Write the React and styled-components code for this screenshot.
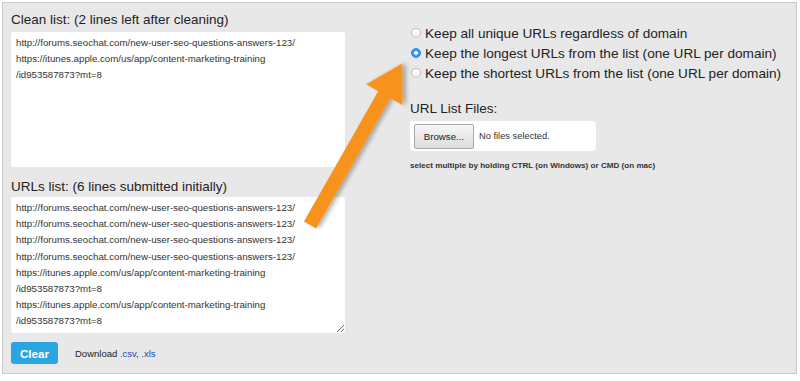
import React from 'react';
import styled, { createGlobalStyle } from 'styled-components';

const Global = createGlobalStyle`
  body {
    margin: 0;
    background: #fff;
    font-family: "Liberation Sans", Arial, Helvetica, sans-serif;
    color: #222;
  }
`

const Page = styled.div`
  position: relative;
  width: 800px;
  height: 381px;
  padding: 2px;
  box-sizing: border-box;
`
const Panel = styled.div`
  width: 795px;
  height: 372px;
  box-sizing: border-box;
  border: 1px solid #cacaca;
  background: #e8e8e8;
  padding: 9px 8px 8px 8px;
  display: flex;
`
const LeftCol = styled.div`
  width: 334px;
  display: flex;
  flex-direction: column;
`
const RightCol = styled.div`
  margin-left: 65px;
  padding-top: 11px;
  display: flex;
  flex-direction: column;
  align-items: flex-start;
`
const Label = styled.div`
  font-size: 13.5px;
  line-height: 16px;
  color: #222;
  margin-top: ${(p) => p.mt || '0'};
  margin-bottom: ${(p) => p.mb || '4px'};
`
const Area = styled.textarea`
  display: block;
  width: 334px;
  height: ${(p) => p.h};
  box-sizing: border-box;
  border: none;
  border-radius: 3px;
  background: #fff;
  padding: 3px 5px;
  margin: 0;
  font-family: "Liberation Sans", Arial, sans-serif;
  font-size: 9.7px;
  line-height: 16.2px;
  color: #333;
  white-space: pre;
  overflow: hidden;
  outline: none;
  resize: ${(p) => p.resize || 'none'};
`
const Actions = styled.div`
  display: flex;
  align-items: center;
  margin-top: 9px;
  gap: 17px;
`
const ClearButton = styled.button`
  width: 47px;
  height: 22px;
  border: none;
  border-radius: 3px;
  background: #27a6e1;
  color: #fff;
  font-family: "Liberation Sans", Arial, sans-serif;
  font-weight: bold;
  font-size: 11.6px;
  padding: 0;
`
const Download = styled.span`
  font-size: 9.5px;
  color: #222;
  a {
    color: #1d47b0;
    text-decoration: none;
  }
`
const RadioRow = styled.label`
  display: flex;
  align-items: center;
  height: 20px;
  font-size: 13.6px;
  color: #222;
`
const Radio = styled.input`
  appearance: none;
  width: 10px;
  height: 10px;
  margin: 0 4px 0 1px;
  border-radius: 50%;
  box-sizing: border-box;
  border: 1px solid #bdbdbd;
  background: linear-gradient(#fff, #f1f1f1);
  &:checked {
    border-color: #2c86ee;
    background: radial-gradient(circle, #fff 0 1.6px, #3693f8 2.2px);
  }
`
const FileBox = styled.div`
  width: 186px;
  height: 30px;
  box-sizing: border-box;
  background: #fff;
  border-radius: 3px;
  padding: 3px 4px;
  display: flex;
  align-items: center;
  gap: 5px;
`
const Browse = styled.button`
  width: 60px;
  height: 25px;
  box-sizing: border-box;
  border: 1px solid #a8a8a8;
  border-radius: 2px;
  background: linear-gradient(#f7f7f7, #dcdcdc);
  font-family: "Liberation Sans", Arial, sans-serif;
  font-size: 9.7px;
  color: #222;
  padding: 0;
`
const FileName = styled.span`
  font-size: 9.3px;
  color: #333;
`
const Hint = styled.div`
  margin-top: 10px;
  font-size: 8.1px;
  font-weight: bold;
  line-height: 10px;
  color: #333;
`
const Overlay = styled.svg`
  position: absolute;
  left: 0;
  top: 0;
  pointer-events: none;
`

const forum = 'http://forums.seochat.com/new-user-seo-questions-answers-123/';
const itunes = 'https://itunes.apple.com/us/app/content-marketing-training\n/id953587873?mt=8';

const cleanList = [forum, itunes].join('\n');
const urlsList = [forum, forum, forum, forum, itunes, itunes].join('\n');

function App() {
  return <>
    <Global />
    <Page>
      <Panel>
        <LeftCol>
          <Label>Clean list: (2 lines left after cleaning)</Label>
          <Area h='135px' readOnly value={cleanList} />
          <Label mt='12px' mb='2px'>URLs list: (6 lines submitted initially)</Label>
          <Area h='136px' resize='vertical' readOnly value={urlsList} />
          <Actions>
            <ClearButton>Clear</ClearButton>
            <Download>Download <a href='#'>.csv</a>, <a href='#'>.xls</a></Download>
          </Actions>
        </LeftCol>
        <RightCol>
          <RadioRow><Radio type='radio' name='mode' />Keep all unique URLs regardless of domain</RadioRow>
          <RadioRow><Radio type='radio' name='mode' defaultChecked />Keep the longest URLs from the list (one URL per domain)</RadioRow>
          <RadioRow><Radio type='radio' name='mode' />Keep the shortest URLs from the list (one URL per domain)</RadioRow>
          <Label mt='18px' mb='4px'>URL List Files:</Label>
          <FileBox>
            <Browse>Browse...</Browse>
            <FileName>No files selected.</FileName>
          </FileBox>
          <Hint>select multiple by holding CTRL (on Windows) or CMD (on mac)</Hint>
        </RightCol>
      </Panel>
      <Overlay width='800' height='381'>
        <defs>
          <filter id='shadow' x='-20%' y='-20%' width='140%' height='140%'>
            <feDropShadow dx='2' dy='3' stdDeviation='2' floodColor='#000' floodOpacity='0.3' />
          </filter>
        </defs>
        <g transform='translate(310 225) rotate(-60.3)' filter='url(#shadow)'>
          <polygon points='0,-7 150,-7 150,-21 186,0 150,21 150,7 0,7' fill='#f7931d' />
        </g>
      </Overlay>
    </Page>
  </>
}

export default App;
